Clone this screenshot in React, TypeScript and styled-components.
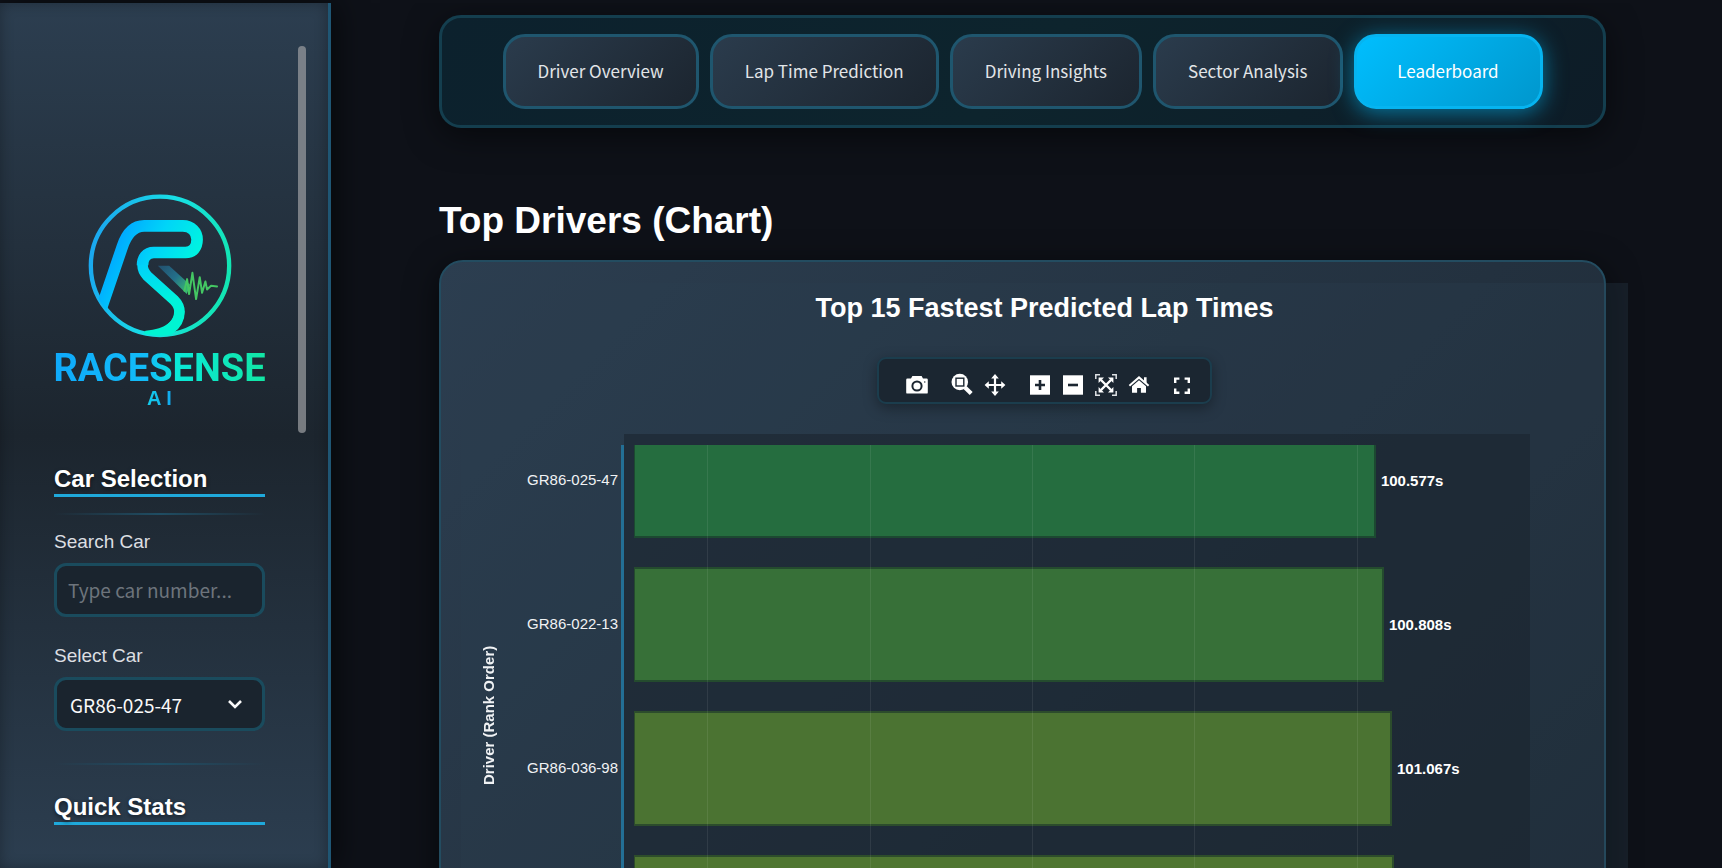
import React from "react";
import styled, { createGlobalStyle, css } from "styled-components";

const GlobalStyle = createGlobalStyle`
  *, *::before, *::after { box-sizing: border-box; }
  html, body, #root { height: 100%; }
  body {
    margin: 0;
    background: #0e1118;
    color: #ffffff;
    font-family: "Liberation Sans", Arial, sans-serif;
    overflow: hidden;
  }
  h1, h2, h3, p { margin: 0; }
`;

const uiFont = css`
  font-family: "Noto Sans CJK SC", "Noto Sans", sans-serif;
`;

const Shell = styled.div`
  display: flex;
  height: 100vh;
  padding-top: 3px;
`;

/* ---------- Sidebar ---------- */

const Sidebar = styled.aside`
  position: relative;
  flex: 0 0 331px;
  padding: 191px 63px 0 54px;
  overflow: hidden;
  background: linear-gradient(180deg, #2c3e50 0%, #1c252e 50%, #2c3e50 100%);
  border-right: 3px solid #1f5674;
  box-shadow: 4px 0 30px rgba(0, 0, 0, 0.6), inset 0 0 14px rgba(0, 0, 0, 0.3);
`;

const ScrollThumb = styled.div`
  position: absolute;
  top: 43px;
  right: 22px;
  width: 8px;
  height: 387px;
  border-radius: 4px;
  background: rgba(150, 152, 156, 0.75);
`;

const Brand = styled.div`
  display: flex;
  flex-direction: column;
  align-items: center;
`;

const Wordmark = styled.div`
  margin-top: 11px;
  font-family: Roboto, sans-serif;
  font-weight: 700;
  font-size: 38px;
  line-height: 38px;
  white-space: nowrap;
  color: transparent;
  background: linear-gradient(90deg, #0fa9fb 0%, #12bdf8 45%, #0ae8d8 58%, #12e6a4 100%);
  background-clip: text;
  -webkit-background-clip: text;
`;

const WordmarkSuffix = styled.div`
  font-family: "Liberation Sans", Arial, sans-serif;
  font-weight: 700;
  font-size: 20px;
  line-height: 22px;
  color: transparent;
  background: linear-gradient(90deg, #14cdea 0%, #12a8ee 100%);
  background-clip: text;
  -webkit-background-clip: text;
`;

const SectionTitle = styled.h2<{ $gap: number }>`
  margin-top: ${(p) => p.$gap}px;
  height: 34px;
  border-bottom: 3px solid #1fa9db;
  font-size: 24px;
  line-height: 31px;
  font-weight: 700;
  text-shadow: 0 2px 4px rgba(0, 0, 0, 0.5);
`;

const Divider = styled.hr<{ $gap: number }>`
  height: 2px;
  margin: ${(p) => p.$gap}px 0 0;
  border: 0;
  background: linear-gradient(90deg, transparent, #1f4d63, transparent);
`;

const FieldLabel = styled.label<{ $gap: number }>`
  display: block;
  margin-top: ${(p) => p.$gap}px;
  margin-bottom: 10px;
  font-size: 19px;
  line-height: 22px;
  color: #dcdfe2;
`;

const fieldBox = css`
  display: block;
  width: 100%;
  height: 54px;
  border: 3px solid #1a4b5d;
  border-radius: 12px;
  background: #1a242e;
  color: #fafafa;
  font-size: 19px;
  outline: none;
  ${uiFont}
`;

const TextField = styled.input`
  ${fieldBox}
  padding: 0 11px 2px;
  &::placeholder { color: #6d747c; opacity: 1; }
`;

const SelectWrap = styled.div`
  position: relative;
`;

const SelectField = styled.select`
  ${fieldBox}
  appearance: none;
  padding: 0 44px 0 13px;
`;

const Chevron = styled.svg`
  position: absolute;
  right: 22px;
  top: 19px;
  width: 16px;
  height: 16px;
  pointer-events: none;
`;

/* ---------- Main area ---------- */

const Main = styled.main`
  flex: 1;
  min-width: 0;
  overflow: hidden;
  padding: 12px 116px 0 108px;
`;

const TabBar = styled.nav`
  display: flex;
  justify-content: center;
  gap: 11px;
  padding: 16px;
  border: 3px solid #143e4e;
  border-radius: 22px;
  background: linear-gradient(135deg, #0c212d 0%, #0d242d 50%, #0d1c27 100%);
  box-shadow: 0 8px 32px rgba(0, 0, 0, 0.5);
`;

const Tab = styled.button<{ $active?: boolean }>`
  ${uiFont}
  min-width: 189px;
  height: 75px;
  padding: 0 32px 1px;
  border: 3px solid #1f566e;
  border-radius: 22px;
  background: linear-gradient(135deg, #2b3c4d, #1b242e);
  background-origin: border-box;
  color: #e2e5e8;
  font-size: 17px;
  line-height: 26px;
  font-weight: 400;
  white-space: nowrap;
  ${(p) =>
    p.$active &&
    css`
      border-color: #06b4f0;
      background: linear-gradient(135deg, #00bfff, #0096cc);
      background-origin: border-box;
      color: #ffffff;
      box-shadow: 0 4px 22px rgba(0, 191, 255, 0.55);
    `}
`;

const PageTitle = styled.h1`
  margin-top: 70px;
  font-size: 37px;
  line-height: 46px;
  font-weight: 700;
`;

const Card = styled.section`
  margin-top: 16px;
  padding: 21px 0 0 20px;
  border: 2px solid #234c60;
  border-radius: 24px;
  background: linear-gradient(135deg, #2c3e50 0, #1a242e 1500px);
  box-shadow: 0 8px 32px rgba(0, 0, 0, 0.6);
`;

const Chart = styled.figure`
  margin: 0 -24px 0 0;
  background: rgba(44, 62, 80, 0.3);
`;

const ChartTitle = styled.h3`
  padding-top: 9px;
  text-align: center;
  font-size: 27px;
  line-height: 32px;
  font-weight: 700;
`;

const ModeBar = styled.div`
  display: flex;
  width: max-content;
  height: 47px;
  margin: 33px auto 0;
  padding: 14px 12px 0 9px;
  border: 2px solid #1b3d4d;
  border-radius: 9px;
  background: #1b2631;
  box-shadow: 0 4px 14px rgba(0, 0, 0, 0.35);
`;

const ModeGroup = styled.div`
  display: flex;
  gap: 1px;
  margin-left: 13px;
  &:last-child { margin-left: 11px; }
`;

const ModeButton = styled.button`
  display: block;
  padding: 0 4px;
  border: 0;
  background: none;
  height: 24px;
  svg { display: block; width: 24px; height: 24px; }
`;

const PlotLayout = styled.div`
  display: flex;
  margin-top: 30px;
  padding-right: 98px;
`;

const AxisTitle = styled.div`
  width: 20px;
  margin: 0 17px 0 18px;
  height: 562px;
  writing-mode: vertical-rl;
  transform: rotate(180deg);
  font-size: 15px;
  line-height: 20px;
  font-weight: 700;
  text-align: center;
  color: #f0f2f4;
`;

const AxisLabels = styled.ol`
  flex: 0 0 108px;
  display: flex;
  flex-direction: column;
  gap: 29px;
  margin: 11px 0 0;
  padding: 0 3px 0 0;
  list-style: none;
  border-right: 3px solid #236f95;
  overflow: hidden;
`;

const AxisLabel = styled.li`
  height: 115px;
  line-height: 114px;
  flex: none;
  font-size: 15px;
  text-align: right;
  white-space: nowrap;
  color: #f0f2f4;
  &:first-child { margin-top: -22px; }
`;

const Plot = styled.div`
  flex: 1;
  min-width: 0;
  padding: 11px 0 0 10px;
  background: rgba(26, 37, 47, 0.6);
`;

const Bars = styled.div`
  position: relative;
  display: flex;
  flex-direction: column;
  gap: 29px;
  overflow: hidden;
`;

const BarRow = styled.div`
  display: flex;
  flex: none;
  align-items: center;
  height: 115px;
  &:first-child { margin-top: -22px; }
`;

const Bar = styled.div`
  flex: none;
  height: 115px;
  border: 2px solid rgba(24, 50, 40, 0.6);
  border-left-width: 1px;
`;

const BarValue = styled.span`
  margin-left: 5px;
  font-size: 15px;
  font-weight: 700;
  line-height: 20px;
`;

const GridLine = styled.i`
  position: absolute;
  top: 0;
  bottom: 0;
  width: 1px;
  background: rgba(255, 255, 255, 0.08);
`;

/* ---------- Data ---------- */

const tabs = ["Driver Overview", "Lap Time Prediction", "Driving Insights", "Sector Analysis", "Leaderboard"];

const drivers = [
  { name: "GR86-025-47", value: "100.577s", width: 82.8, color: "#256d3f" },
  { name: "GR86-022-13", value: "100.808s", width: 83.7, color: "#377038" },
  { name: "GR86-036-98", value: "101.067s", width: 84.6, color: "#4b7332" },
  { name: "", value: "", width: 84.8, color: "#4f7631" },
];

const ticks = [8.2, 26.3, 44.4, 62.5, 80.7];

/* ---------- Drawings ---------- */

const LogoMark = () => (
  <svg width="144" height="144" viewBox="127 27 433 433" fill="none" role="img" aria-label="RaceSense logo">
    <defs>
      <linearGradient id="ring" x1="129" y1="200" x2="558" y2="290" gradientUnits="userSpaceOnUse">
        <stop offset="0" stopColor="#1aa6f0" />
        <stop offset="0.5" stopColor="#18dfe6" />
        <stop offset="1" stopColor="#12e6b0" />
      </linearGradient>
      <linearGradient id="track" x1="230" y1="150" x2="440" y2="250" gradientUnits="userSpaceOnUse">
        <stop offset="0" stopColor="#00acff" />
        <stop offset="0.45" stopColor="#00d4f8" />
        <stop offset="1" stopColor="#00f5e0" />
      </linearGradient>
      <linearGradient id="slash" x1="340" y1="243" x2="430" y2="325" gradientUnits="userSpaceOnUse">
        <stop offset="0" stopColor="#22506e" />
        <stop offset="0.5" stopColor="#24708a" />
        <stop offset="1" stopColor="#3cc470" />
      </linearGradient>
      <linearGradient id="lower" x1="290" y1="240" x2="370" y2="440" gradientUnits="userSpaceOnUse">
        <stop offset="0" stopColor="#00d2fa" />
        <stop offset="0.6" stopColor="#00f2dc" />
        <stop offset="1" stopColor="#00f5d0" />
      </linearGradient>
      <clipPath id="disc">
        <circle cx="343.5" cy="243" r="210" />
      </clipPath>
    </defs>
    <circle cx="343.5" cy="243" r="208" stroke="url(#ring)" strokeWidth="13" />
    <g clipPath="url(#disc)">
      <path
        d="M164 380L230 186C242 150 262 123 296 123H412C438 123 455 141 455 164C455 188 442 203 420 203H325C302 203 291 220 291 241"
        stroke="url(#track)"
        strokeWidth="35"
      />
      <path
        d="M291 240C291 255 297 265 306 274L385 345C396 356 402 366 402 381C402 402 390 422 372 434"
        stroke="url(#lower)"
        strokeWidth="32"
      />
      <path d="M387 375C389 404 366 434 300 438L290 450L343 457L378 450C402 428 417 408 417 378Z" fill="#00f4d2" />
    </g>
    <path d="M337 243H371L434 300L424 328Z" fill="url(#slash)" />
    <path
      d="M417 318L425 283L431 328L441 264L452 343L463 277L470 324L480 290L485 314L497 303L515 305"
      stroke="#44c763"
      strokeWidth="6"
      strokeLinejoin="round"
      strokeLinecap="round"
    />
  </svg>
);

const Svg = ({ children }: { children: React.ReactNode }) => (
  <svg viewBox="0 0 24 24" fill="#ffffff" aria-hidden="true">
    {children}
  </svg>
);

const dark = "#1b2631";

const icons = {
  camera: (
    <Svg>
      <path d="M2.4 5.6H6L7.4 3H16.6L18 5.6H21.6Q22.8 5.6 22.8 6.8V19.4Q22.8 20.6 21.6 20.6H2.4Q1.2 20.6 1.2 19.4V6.8Q1.2 5.6 2.4 5.6Z" />
      <circle cx="12" cy="13" r="4.6" stroke={dark} strokeWidth="2" />
      <circle cx="19.8" cy="9" r="0.7" fill={dark} />
    </Svg>
  ),
  zoom: (
    <Svg>
      <circle cx="9.8" cy="9" r="8.3" />
      <path d="M15 14.5L21.2 20.4" stroke="#ffffff" strokeWidth="4.2" />
      <rect x="6" y="5.2" width="7.8" height="7.8" stroke={dark} strokeWidth="1.4" />
    </Svg>
  ),
  pan: (
    <Svg>
      <path d="M12 1L15.8 5.4H13.1V10.9H18.2V8.2L22.4 12L18.2 15.8V13.1H13.1V18.6H15.8L12 23L8.2 18.6H10.9V13.1H5.8V15.8L1.6 12L5.8 8.2V10.9H10.9V5.4H8.2Z" />
    </Svg>
  ),
  plus: (
    <Svg>
      <rect x="2" y="2.3" width="20" height="19.4" />
      <path d="M12 7V17M7 12H17" stroke={dark} strokeWidth="2.6" />
    </Svg>
  ),
  minus: (
    <Svg>
      <rect x="2" y="2.3" width="20" height="19.4" />
      <path d="M7 12H17" stroke={dark} strokeWidth="2.6" />
    </Svg>
  ),
  autoscale: (
    <Svg>
      <path
        d="M1.8 6V1.8H6M18 1.8H22.2V6M22.2 18V22.2H18M6 22.2H1.8V18"
        fill="none"
        stroke="#dfe2e5"
        strokeWidth="1.5"
      />
      <path d="M7 7L17 17M17 7L7 17" stroke="#ffffff" strokeWidth="2.4" />
      <path d="M4.6 4.6H10L4.6 10ZM19.4 4.6V10L14 4.6ZM19.4 19.4H14L19.4 14ZM4.6 19.4V14L10 19.4Z" />
    </Svg>
  ),
  home: (
    <Svg>
      <path d="M2.4 12.8L12 4.4L21.6 12.8" fill="none" stroke="#ffffff" strokeWidth="2" />
      <path d="M17 4.2H19.6V10.5L17 8.2Z" />
      <path d="M12 7.2L19 13.3V19.8H13.9V15H10.1V19.8H5V13.3Z" />
    </Svg>
  ),
  fullscreen: (
    <Svg>
      <path
        d="M5.2 10V5.6H9.4M14.6 5.6H18.8V10M18.8 15.4V19.8H14.6M9.4 19.8H5.2V15.4"
        fill="none"
        stroke="#ffffff"
        strokeWidth="2.4"
      />
    </Svg>
  ),
};

type IconName = keyof typeof icons;

const modeGroups: { icon: IconName; label: string }[][] = [
  [{ icon: "camera", label: "Download plot as a png" }],
  [
    { icon: "zoom", label: "Zoom" },
    { icon: "pan", label: "Pan" },
  ],
  [
    { icon: "plus", label: "Zoom in" },
    { icon: "minus", label: "Zoom out" },
    { icon: "autoscale", label: "Autoscale" },
    { icon: "home", label: "Reset axes" },
  ],
  [{ icon: "fullscreen", label: "Fullscreen" }],
];

export default function App() {
  return (
    <>
      <GlobalStyle />
      <Shell>
        <Sidebar>
          <Brand>
            <LogoMark />
            <Wordmark>RACESENSE</Wordmark>
            <WordmarkSuffix>A I</WordmarkSuffix>
          </Brand>
          <ScrollThumb />

          <SectionTitle $gap={54}>Car Selection</SectionTitle>
          <Divider $gap={16} />

          <FieldLabel $gap={16} htmlFor="car-search">Search Car</FieldLabel>
          <TextField id="car-search" type="text" placeholder="Type car number..." />

          <FieldLabel $gap={28} htmlFor="car-select">Select Car</FieldLabel>
          <SelectWrap>
            <SelectField id="car-select" defaultValue="GR86-025-47">
              <option>GR86-025-47</option>
              <option>GR86-022-13</option>
              <option>GR86-036-98</option>
            </SelectField>
            <Chevron viewBox="0 0 16 16" fill="none" aria-hidden="true">
              <path d="M2 5L8 11L14 5" stroke="#fafafa" strokeWidth="2.6" />
            </Chevron>
          </SelectWrap>

          <Divider $gap={32} />
          <SectionTitle $gap={26}>Quick Stats</SectionTitle>
        </Sidebar>

        <Main>
          <TabBar>
            {tabs.map((t) => (
              <Tab key={t} type="button" $active={t === "Leaderboard"}>
                {t}
              </Tab>
            ))}
          </TabBar>

          <PageTitle>Top Drivers (Chart)</PageTitle>

          <Card>
            <Chart>
              <ChartTitle>Top 15 Fastest Predicted Lap Times</ChartTitle>
              <ModeBar>
                {modeGroups.map((group) => (
                  <ModeGroup key={group[0].icon}>
                    {group.map((b) => (
                      <ModeButton key={b.icon} type="button" aria-label={b.label}>
                        {icons[b.icon]}
                      </ModeButton>
                    ))}
                  </ModeGroup>
                ))}
              </ModeBar>
              <PlotLayout>
                <AxisTitle>Driver (Rank Order)</AxisTitle>
                <AxisLabels>
                  {drivers.map((d, i) => (
                    <AxisLabel key={i}>{d.name}</AxisLabel>
                  ))}
                </AxisLabels>
                <Plot>
                  <Bars>
                    {drivers.map((d, i) => (
                      <BarRow key={i}>
                        <Bar style={{ width: `${d.width}%`, backgroundColor: d.color }} />
                        {d.value && <BarValue>{d.value}</BarValue>}
                      </BarRow>
                    ))}
                    {ticks.map((t) => (
                      <GridLine key={t} style={{ left: `${t}%` }} />
                    ))}
                  </Bars>
                </Plot>
              </PlotLayout>
            </Chart>
          </Card>
        </Main>
      </Shell>
    </>
  );
}
